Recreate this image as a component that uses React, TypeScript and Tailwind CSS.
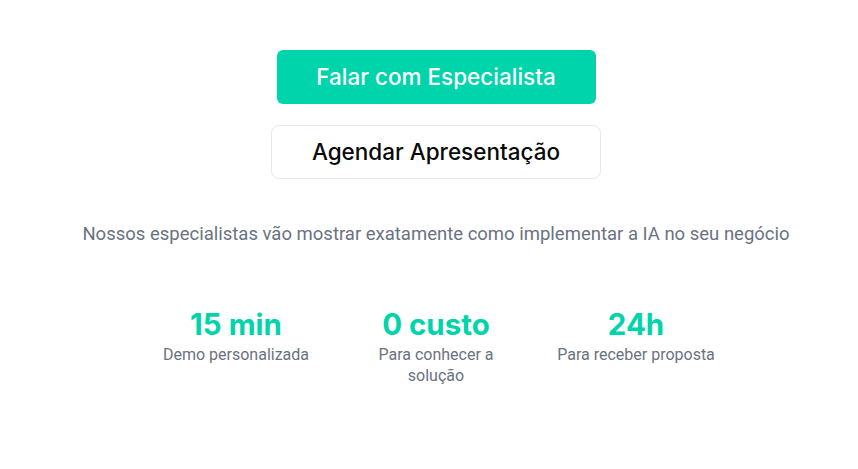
import React from 'react';

const stats = [
  { value: '15 min', label: 'Demo personalizada' },
  { value: '0 custo', label: 'Para conhecer a solução' },
  { value: '24h', label: 'Para receber proposta' },
];

export default function App() {
  return (
    <div className="min-h-screen bg-white pl-[14px] font-['Roboto',Arial,sans-serif]">
      <div className="flex flex-col items-center pt-[50px]">
        {/* CTA buttons */}
        <div className="flex flex-col items-center gap-[21px] font-['Inter',sans-serif]">
          <button className="w-[319px] h-[54px] rounded-md bg-[#00d4aa] text-white text-[22.5px] font-medium">
            Falar com Especialista
          </button>
          <button className="w-[330px] h-[54px] rounded-lg border border-gray-200 bg-white text-[#0a0a0a] text-[22.5px] font-medium">
            Agendar Apresentação
          </button>
        </div>

        <p className="mt-[41px] text-[18.5px] leading-7 text-gray-500">
          Nossos especialistas vão mostrar exatamente como implementar a IA no seu negócio
        </p>

        {/* Stats */}
        <div className="mt-[56px] grid grid-cols-3 gap-10">
          {stats.map((s) => (
            <div key={s.value} className="w-[160px] text-center">
              <div className="font-['Inter',sans-serif] text-[29.5px] leading-[40px] font-bold text-[#00d4aa]">{s.value}</div>
              <div className="text-[16px] leading-[21px] text-gray-500">{s.label}</div>
            </div>
          ))}
        </div>
      </div>
    </div>
  );
}
